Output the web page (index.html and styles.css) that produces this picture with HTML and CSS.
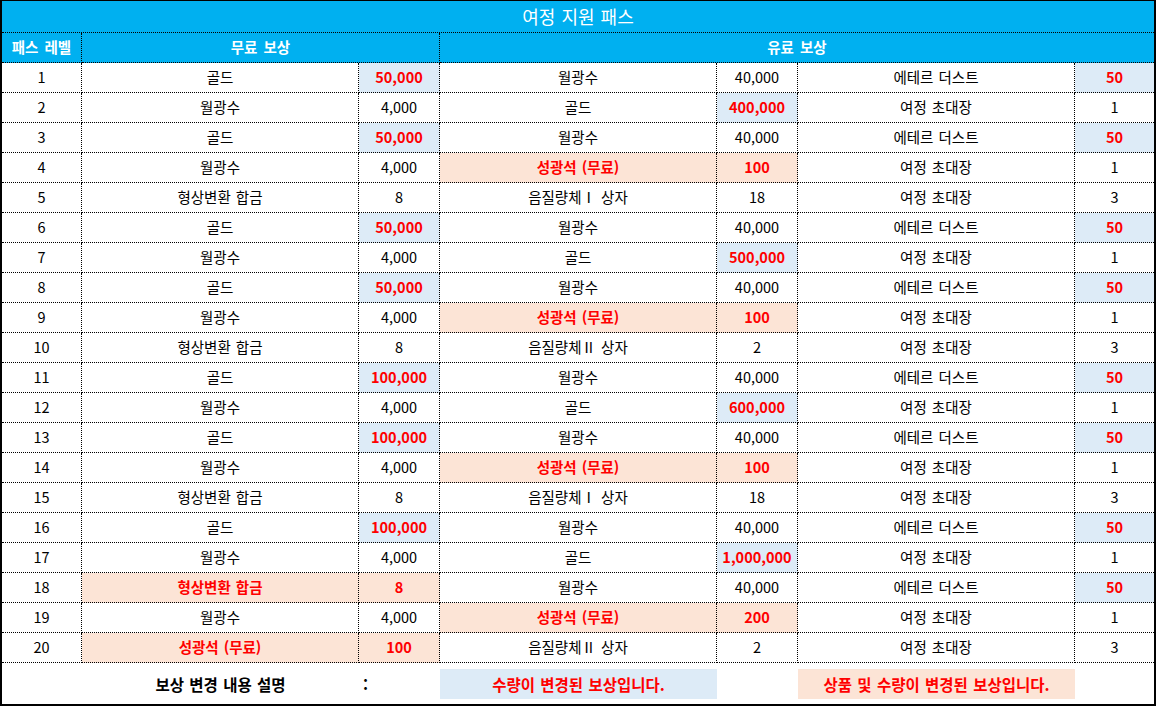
FILE: index.html
```html
<!DOCTYPE html>
<html lang="ko">
<head>
<meta charset="utf-8">
<title>여정 지원 패스</title>
<link rel="stylesheet" href="styles.css">
</head>
<body>
<div class="sheet">
  <div class="title">여정 지원 패스</div>

  <div class="c hd">패스 레벨</div>
  <div class="c hd span2">무료 보상</div>
  <div class="c hd span4 last">유료 보상</div>

  <div class="c">1</div><div class="c">골드</div><div class="c blue r">50,000</div><div class="c">월광수</div><div class="c">40,000</div><div class="c">에테르 더스트</div><div class="c blue r last">50</div>
  <div class="c">2</div><div class="c">월광수</div><div class="c">4,000</div><div class="c">골드</div><div class="c blue r">400,000</div><div class="c">여정 초대장</div><div class="c last">1</div>
  <div class="c">3</div><div class="c">골드</div><div class="c blue r">50,000</div><div class="c">월광수</div><div class="c">40,000</div><div class="c">에테르 더스트</div><div class="c blue r last">50</div>
  <div class="c">4</div><div class="c">월광수</div><div class="c">4,000</div><div class="c pink r">성광석 (무료)</div><div class="c pink r">100</div><div class="c">여정 초대장</div><div class="c last">1</div>
  <div class="c">5</div><div class="c">형상변환 합금</div><div class="c">8</div><div class="c">음질량체Ⅰ 상자</div><div class="c">18</div><div class="c">여정 초대장</div><div class="c last">3</div>
  <div class="c">6</div><div class="c">골드</div><div class="c blue r">50,000</div><div class="c">월광수</div><div class="c">40,000</div><div class="c">에테르 더스트</div><div class="c blue r last">50</div>
  <div class="c">7</div><div class="c">월광수</div><div class="c">4,000</div><div class="c">골드</div><div class="c blue r">500,000</div><div class="c">여정 초대장</div><div class="c last">1</div>
  <div class="c">8</div><div class="c">골드</div><div class="c blue r">50,000</div><div class="c">월광수</div><div class="c">40,000</div><div class="c">에테르 더스트</div><div class="c blue r last">50</div>
  <div class="c">9</div><div class="c">월광수</div><div class="c">4,000</div><div class="c pink r">성광석 (무료)</div><div class="c pink r">100</div><div class="c">여정 초대장</div><div class="c last">1</div>
  <div class="c">10</div><div class="c">형상변환 합금</div><div class="c">8</div><div class="c">음질량체Ⅱ 상자</div><div class="c">2</div><div class="c">여정 초대장</div><div class="c last">3</div>
  <div class="c">11</div><div class="c">골드</div><div class="c blue r">100,000</div><div class="c">월광수</div><div class="c">40,000</div><div class="c">에테르 더스트</div><div class="c blue r last">50</div>
  <div class="c">12</div><div class="c">월광수</div><div class="c">4,000</div><div class="c">골드</div><div class="c blue r">600,000</div><div class="c">여정 초대장</div><div class="c last">1</div>
  <div class="c">13</div><div class="c">골드</div><div class="c blue r">100,000</div><div class="c">월광수</div><div class="c">40,000</div><div class="c">에테르 더스트</div><div class="c blue r last">50</div>
  <div class="c">14</div><div class="c">월광수</div><div class="c">4,000</div><div class="c pink r">성광석 (무료)</div><div class="c pink r">100</div><div class="c">여정 초대장</div><div class="c last">1</div>
  <div class="c">15</div><div class="c">형상변환 합금</div><div class="c">8</div><div class="c">음질량체Ⅰ 상자</div><div class="c">18</div><div class="c">여정 초대장</div><div class="c last">3</div>
  <div class="c">16</div><div class="c">골드</div><div class="c blue r">100,000</div><div class="c">월광수</div><div class="c">40,000</div><div class="c">에테르 더스트</div><div class="c blue r last">50</div>
  <div class="c">17</div><div class="c">월광수</div><div class="c">4,000</div><div class="c">골드</div><div class="c blue r">1,000,000</div><div class="c">여정 초대장</div><div class="c last">1</div>
  <div class="c">18</div><div class="c pink r">형상변환 합금</div><div class="c pink r">8</div><div class="c">월광수</div><div class="c">40,000</div><div class="c">에테르 더스트</div><div class="c blue r last">50</div>
  <div class="c">19</div><div class="c">월광수</div><div class="c">4,000</div><div class="c pink r">성광석 (무료)</div><div class="c pink r">200</div><div class="c">여정 초대장</div><div class="c last">1</div>
  <div class="c">20</div><div class="c pink r">성광석 (무료)</div><div class="c pink r">100</div><div class="c">음질량체Ⅱ 상자</div><div class="c">2</div><div class="c">여정 초대장</div><div class="c last">3</div>

  <div class="f"></div>
  <div class="f legend-label">보상 변경 내용 설명</div>
  <div class="f colon">:</div>
  <div class="f"><span class="box blue r">수량이 변경된 보상입니다.</span></div>
  <div class="f"></div>
  <div class="f"><span class="box pink r">상품 및 수량이 변경된 보상입니다.</span></div>
  <div class="f"></div>
</div>
</body>
</html>
```

FILE: styles.css
```css
html, body {
  margin: 0;
  padding: 0;
  background: #ffffff;
}

body {
  font-family: "Noto Sans CJK KR", "Noto Sans", sans-serif;
  font-size: 14.5px;
  color: #000000;
  word-spacing: 1px;
}

.sheet {
  box-sizing: border-box;
  width: 1156px;
  border-style: solid;
  border-color: #000000;
  border-width: 1px 2px 2px 2px;
  display: grid;
  grid-template-columns: 80px 277px 81px 277px 81px 277px 79px;
  grid-template-rows: 32px 30px repeat(20, 30px) 41px;
}

.title {
  grid-column: 1 / -1;
  background: #00b0f0;
  color: #ffffff;
  font-size: 18px;
  display: flex;
  align-items: center;
  justify-content: center;
  border-bottom: 1px dotted #000000;
  box-sizing: border-box;
  padding-bottom: 2px;
}

.c {
  box-sizing: border-box;
  border-right: 1px dotted #000000;
  border-bottom: 1px dotted #000000;
  display: flex;
  align-items: center;
  justify-content: center;
  white-space: nowrap;
  line-height: 1;
  padding-bottom: 1px;
}

.c.last {
  border-right: none;
}

.hd {
  background: #00b0f0;
  color: #ffffff;
  font-weight: bold;
  word-spacing: 2px;
}

.span2 {
  grid-column: span 2;
}

.span4 {
  grid-column: span 4;
}

.blue {
  background: #ddebf7;
}

.pink {
  background: #fce4d6;
}

.r {
  color: #ff0000;
  font-weight: bold;
}

.f {
  display: flex;
  align-items: center;
  justify-content: center;
  white-space: nowrap;
  font-size: 15.5px;
}

.legend-label {
  font-weight: bold;
}

.colon {
  justify-content: flex-start;
  padding-left: 4px;
  font-weight: bold;
}

.box {
  box-sizing: border-box;
  width: 100%;
  height: 30px;
  display: flex;
  align-items: center;
  justify-content: center;
  margin-top: 1px;
}
```
